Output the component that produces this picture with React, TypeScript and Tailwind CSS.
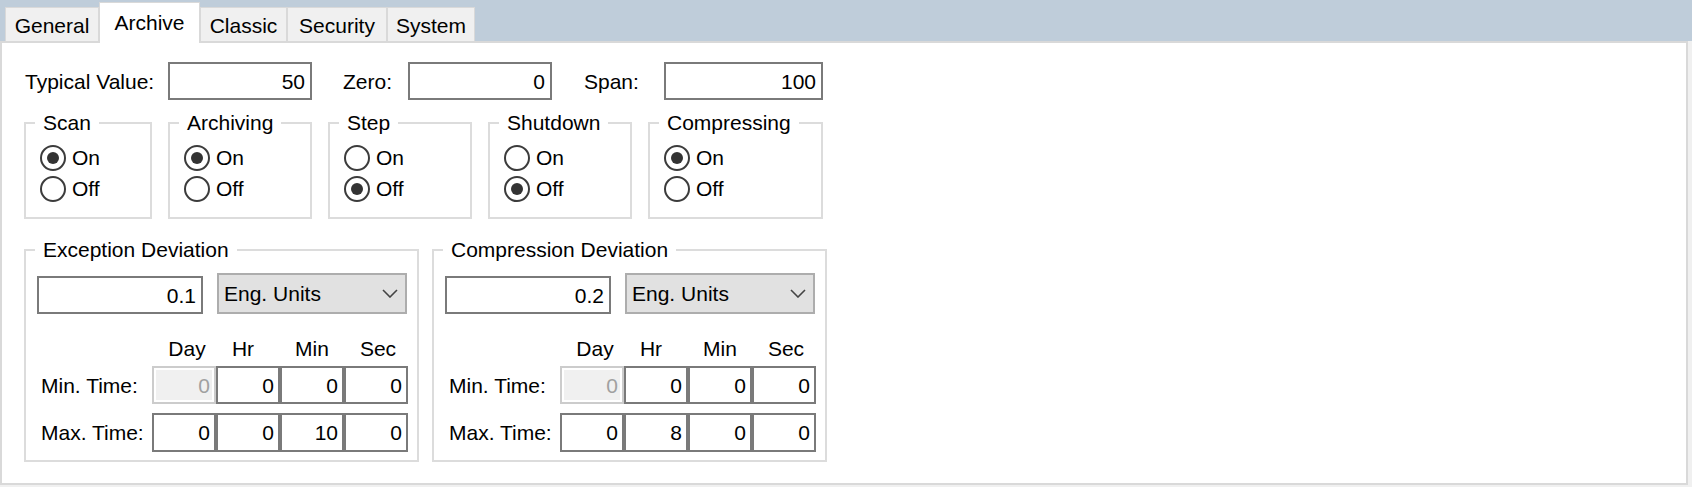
import React from "react";

const tabs = [
  { label: "General", w: "w-[94px]" },
  { label: "Archive", w: "w-[101px]", active: true },
  { label: "Classic", w: "w-[87px]" },
  { label: "Security", w: "w-[100px]" },
  { label: "System", w: "w-[88px]" },
];

function TextBox({ value, className = "" }: { value: string; className?: string }) {
  return (
    <div className={`flex h-[38px] items-center justify-end border-2 border-[#7a7a7a] bg-white pr-[5px] ${className}`}>
      {value}
    </div>
  );
}

function Radio({ label, checked }: { label: string; checked?: boolean }) {
  return (
    <div className="flex h-[31px] items-center">
      <span className="flex h-[26px] w-[26px] items-center justify-center rounded-full border-2 border-[#3c3c3c] bg-white">
        {checked ? <span className="h-[12px] w-[12px] rounded-full bg-[#333333]" /> : null}
      </span>
      <span className="ml-[6px]">{label}</span>
    </div>
  );
}

function OnOffGroup({ title, on, width }: { title: string; on: boolean; width: string }) {
  return (
    <fieldset className={`m-0 border-2 border-[#dcdcdc] p-0 ${width}`}>
      <legend className="ml-[9px] px-[8px] leading-[24px]">{title}</legend>
      <div className="pb-[13px] pl-[14px] pt-[7px]">
        <Radio label="On" checked={on} />
        <Radio label="Off" checked={!on} />
      </div>
    </fieldset>
  );
}

function Cell({ value, disabled }: { value: string; disabled?: boolean }) {
  if (disabled) {
    return (
      <div className="flex h-full w-[64px] items-center justify-end border-2 border-[#cccccc] bg-[#f0f0f0] pr-[4px] text-[#a0a0a0] shadow-[inset_0_0_0_2px_#ffffff]">
        {value}
      </div>
    );
  }
  return (
    <div className="flex h-full w-[64px] items-center justify-end border-2 border-[#7a7a7a] bg-white pr-[4px]">
      {value}
    </div>
  );
}

function DeviationGroup({
  title,
  value,
  minTime,
  maxTime,
}: {
  title: string;
  value: string;
  minTime: string[];
  maxTime: string[];
}) {
  return (
    <fieldset className="m-0 w-[395px] border-2 border-[#dcdcdc] p-0">
      <legend className="ml-[9px] px-[8px] leading-[24px]">{title}</legend>
      <div className="pb-[8px] pl-[11px] pt-[11px]">
        <div className="flex items-end">
          <TextBox value={value} className="w-[166px]" />
          <div className="ml-[14px] flex h-[41px] w-[190px] items-center justify-between border-2 border-[#adadad] bg-[#e1e1e1] pl-[5px] pr-[7px]">
            <span>Eng. Units</span>
            <svg width="16" height="9" viewBox="0 0 16 9" fill="none">
              <path d="M1 1l7 7 7-7" stroke="#444" strokeWidth="1.6" />
            </svg>
          </div>
        </div>

        <div className="mt-[20px] flex h-[28px] items-center pl-[115px]">
          <span className="w-[64px] pl-[6px] text-center">Day</span>
          <span className="w-[64px] pr-[10px] text-center">Hr</span>
          <span className="w-[64px] text-center">Min</span>
          <span className="w-[64px] pl-[4px] text-center">Sec</span>
        </div>

        <div className="mt-[4px] flex h-[38px] items-center">
          <span className="w-[115px] pl-[4px]">Min. Time:</span>
          <Cell value={minTime[0]} disabled />
          <Cell value={minTime[1]} />
          <Cell value={minTime[2]} />
          <Cell value={minTime[3]} />
        </div>

        <div className="mt-[9px] flex h-[39px] items-center">
          <span className="w-[115px] pl-[4px]">Max. Time:</span>
          {maxTime.map((v, i) => (
            <Cell key={i} value={v} />
          ))}
        </div>
      </div>
    </fieldset>
  );
}

export default function App() {
  return (
    <div className="h-[487px] w-[1692px] bg-[#f0f0f0] font-['Liberation_Sans',Arial,sans-serif] text-[21px] leading-none text-black">
      <div className="flex h-[41px] items-end bg-[#bfcdda] pl-[5px]">
        {tabs.map((t) =>
          t.active ? (
            <div
              key={t.label}
              className={`relative z-10 -mb-[2px] flex h-[41px] items-center justify-center border border-b-0 border-[#d9d9d9] bg-white pb-[2px] ${t.w}`}
            >
              {t.label}
            </div>
          ) : (
            <div
              key={t.label}
              className={`flex h-[34px] items-center justify-center border border-b-0 border-[#d9d9d9] bg-[#f0f0f0] pt-[2px] ${t.w}`}
            >
              {t.label}
            </div>
          )
        )}
      </div>

      <div className="h-[444px] w-[1688px] border-2 border-[#d9d9d9] bg-white pl-[22px]">
        <div className="mt-[19px] flex items-center">
          <span className="w-[144px] pl-[1px]">Typical Value:</span>
          <TextBox value="50" className="w-[144px]" />
          <span className="ml-[31px] w-[65px]">Zero:</span>
          <TextBox value="0" className="w-[144px]" />
          <span className="ml-[32px] w-[80px]">Span:</span>
          <TextBox value="100" className="w-[159px]" />
        </div>

        <div className="mt-[11px] flex gap-[16px]">
          <OnOffGroup title="Scan" on width="w-[128px]" />
          <OnOffGroup title="Archiving" on width="w-[144px]" />
          <OnOffGroup title="Step" on={false} width="w-[144px]" />
          <OnOffGroup title="Shutdown" on={false} width="w-[144px]" />
          <OnOffGroup title="Compressing" on width="w-[175px]" />
        </div>

        <div className="mt-[19px] flex gap-[13px]">
          <DeviationGroup
            title="Exception Deviation"
            value="0.1"
            minTime={["0", "0", "0", "0"]}
            maxTime={["0", "0", "10", "0"]}
          />
          <DeviationGroup
            title="Compression Deviation"
            value="0.2"
            minTime={["0", "0", "0", "0"]}
            maxTime={["0", "8", "0", "0"]}
          />
        </div>
      </div>
    </div>
  );
}
